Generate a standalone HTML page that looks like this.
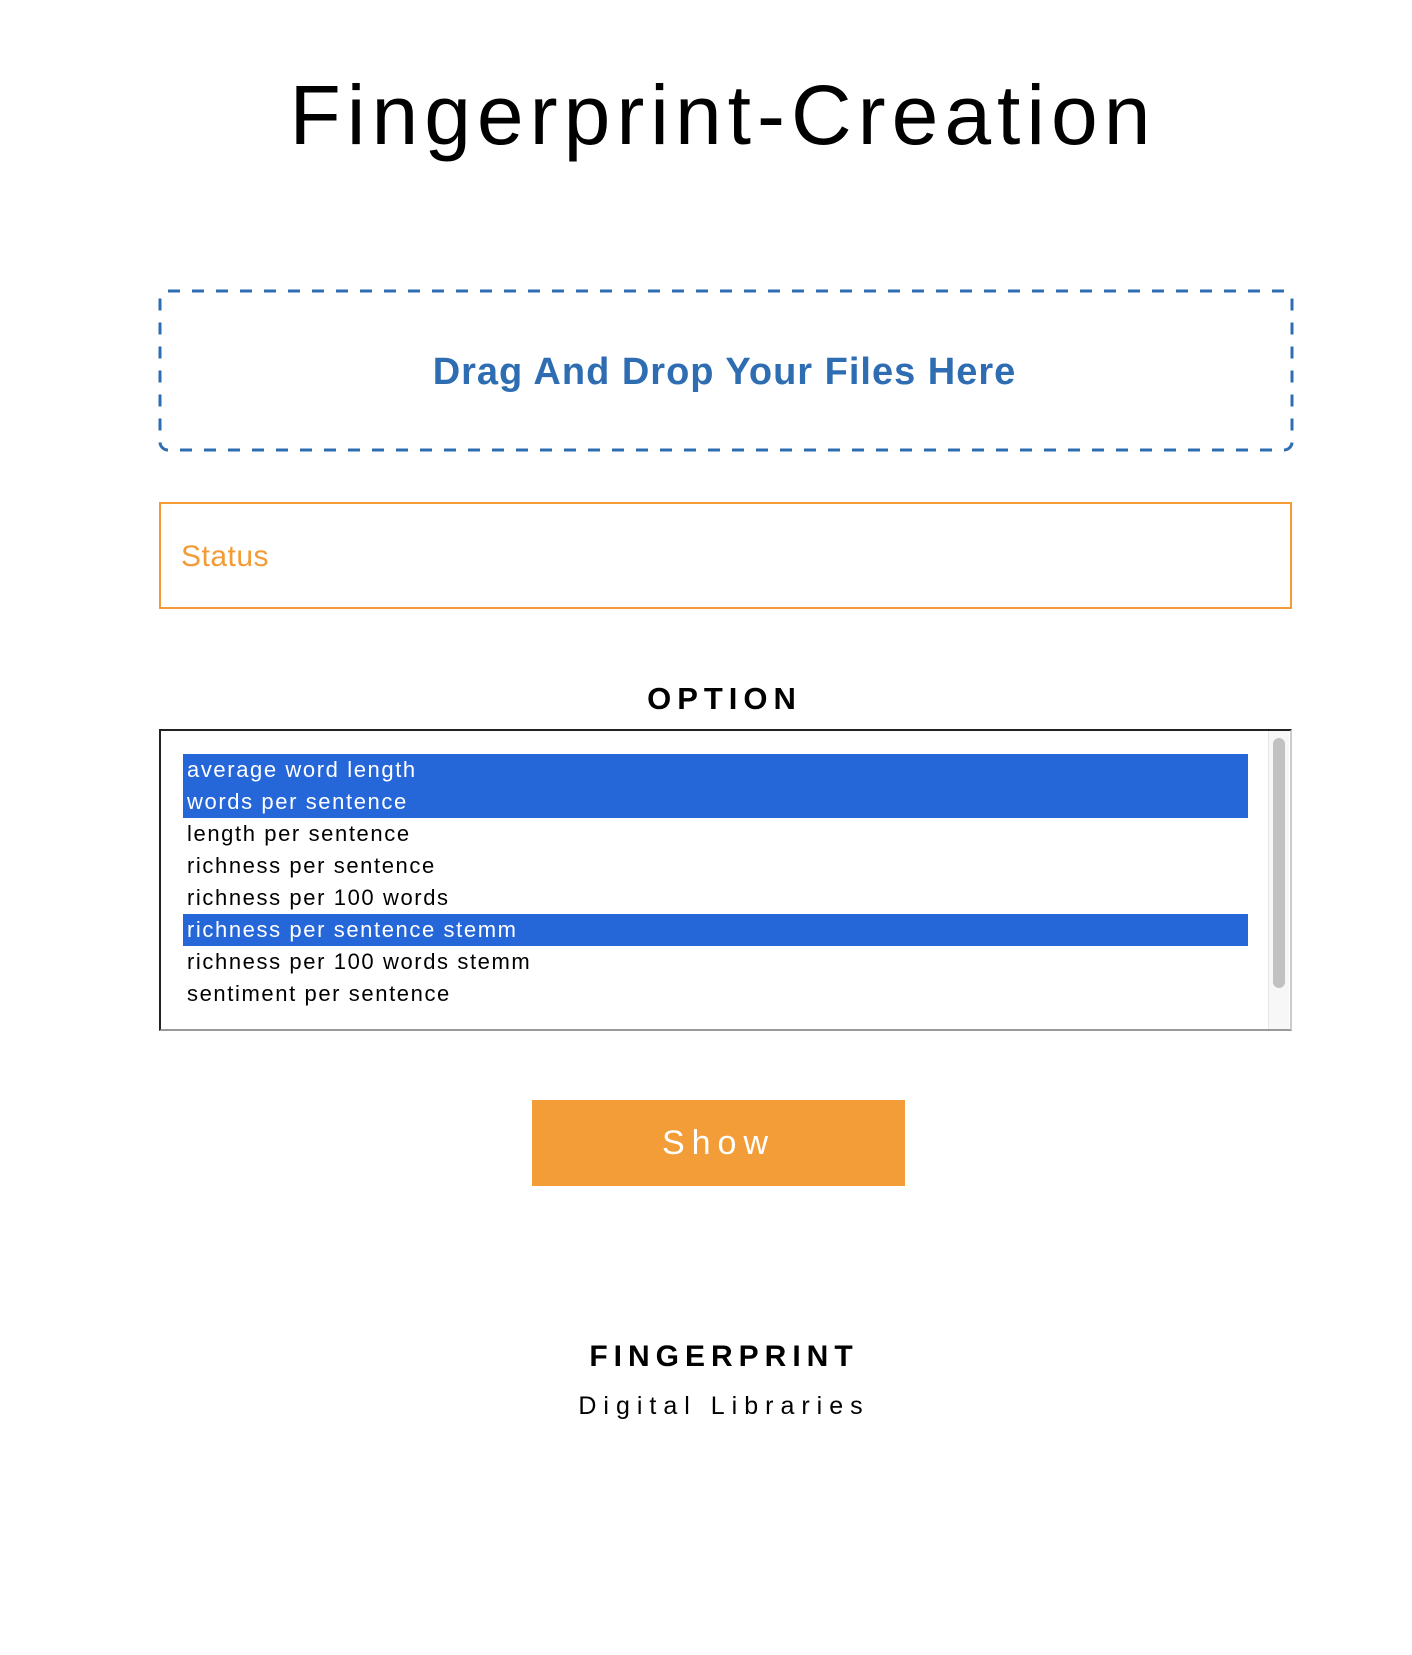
<!DOCTYPE html>
<html><head><meta charset="utf-8"><style>
body{margin:0;width:1412px;height:1655px;background:#fff;font-family:"Liberation Sans",sans-serif;position:relative;overflow:hidden}
.a{position:absolute;white-space:nowrap}
#title{left:240px;width:966px;top:65px;font-size:84px;letter-spacing:6px;text-align:center;color:#000;line-height:100px}
#droptxt{left:159px;width:1131px;top:347px;text-align:center;color:#2f6db2;font-size:38px;font-weight:bold;letter-spacing:1px;line-height:50px}
#status{left:159px;top:502px;width:1129px;height:103px;border:2px solid #f29b37}
#stxt{left:181px;top:537px;font-size:30px;color:#f29b37;line-height:40px;letter-spacing:0.5px}
#opt{left:159px;width:1131px;top:681px;text-align:center;font-size:31px;font-weight:bold;letter-spacing:6px;line-height:36px}
#sel{left:159px;top:729px;width:1129px;height:298px;border:2px solid #222;border-bottom-color:#999;border-right-color:#ccc}
#sb{left:1268px;top:731px;width:20px;height:298px;background:#f7f7f7;border-left:1px solid #e5e5e5}
#thumb{left:1273px;top:738px;width:12px;height:250px;background:#c1c1c1;border-radius:6px}
.row{position:absolute;left:183px;width:1065px;height:32px;line-height:32px;font-size:22px;letter-spacing:1.6px;padding-left:4px;box-sizing:border-box}
.on{background:#2566d8;color:#fff}
#btn{left:532px;top:1100px;width:373px;height:86px;background:#f29d38;color:#fff;font-size:34px;letter-spacing:7px;text-align:center;line-height:86px}
#f1{left:559px;width:330px;top:1339px;text-align:center;font-size:30px;font-weight:bold;letter-spacing:6px;line-height:36px}
#f2{left:559px;width:330px;top:1391px;text-align:center;font-size:25px;letter-spacing:7px;line-height:30px}
</style></head><body>
<div class="a" id="title">Fingerprint-Creation</div>
<svg class="a" width="1140" height="165" style="left:158px;top:289px"><rect x="2" y="2" width="1132" height="159" rx="8" fill="none" stroke="#2f6db2" stroke-width="3" stroke-dasharray="12 12"/></svg>
<div class="a" id="droptxt">Drag And Drop Your Files Here</div>
<div class="a" id="status"></div>
<div class="a" id="stxt">Status</div>
<div class="a" id="opt">OPTION</div>
<div class="a" id="sel"></div>
<div class="row on" style="top:754px">average word length</div>
<div class="row on" style="top:786px">words per sentence</div>
<div class="row" style="top:818px">length per sentence</div>
<div class="row" style="top:850px">richness per sentence</div>
<div class="row" style="top:882px">richness per 100 words</div>
<div class="row on" style="top:914px">richness per sentence stemm</div>
<div class="row" style="top:946px">richness per 100 words stemm</div>
<div class="row" style="top:978px">sentiment per sentence</div>
<div class="a" id="sb"></div>
<div class="a" id="thumb"></div>
<div class="a" id="btn">Show</div>
<div class="a" id="f1">FINGERPRINT</div>
<div class="a" id="f2">Digital Libraries</div>
</body></html>
